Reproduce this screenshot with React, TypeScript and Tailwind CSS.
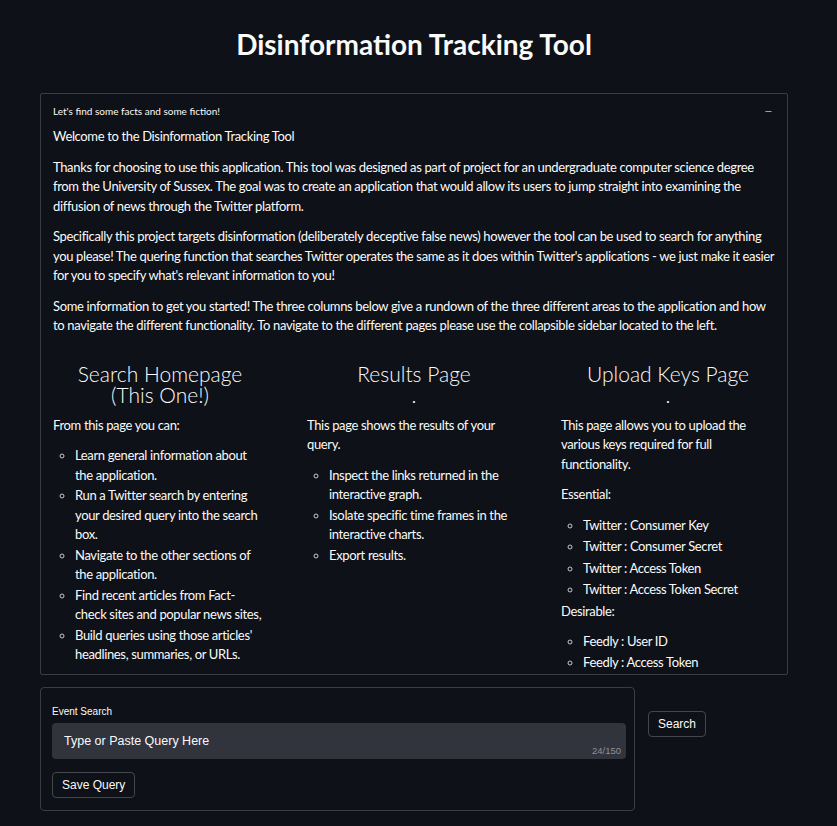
import { Minus } from 'lucide-react';

const body = "font-['Lato',sans-serif]";
const ui = "font-['Liberation_Sans',Arial,sans-serif]";

function Column({ title, sub, children }: { title: string; sub?: string; children: React.ReactNode }) {
    return (
        <div className="w-[214px]">
            <h3 className="text-center text-[21px] leading-[21px] font-light tracking-normal mb-[11px]">
                {title}
                <br />
                {sub}
            </h3>
            {children}
        </div>
    );
}

function Bullets({ items, className = '' }: { items: React.ReactNode[]; className?: string }) {
    return (
        <ul className={`list-[circle] pl-[22px] ${className}`}>
            {items.map((t, i) => (
                <li key={i} className="mb-[1px] marker:text-[#c8c8c8]">{t}</li>
            ))}
        </ul>
    );
}

export default function App() {
    return (
        <div className={`min-h-screen bg-[#0e1117] text-[#fafafa] ${body}`}>
            <div className="ml-[40px] w-[748px] pt-[28px]">
                <h1 className="text-center text-[28px] leading-[32px] font-bold mb-[33px]">
                    Disinformation Tracking Tool
                </h1>

                <div className="border border-[#3a3d44] rounded-[2px]">
                    <div className="flex items-center justify-between px-[12px] pt-[10px] pb-[9px]">
                        <span className="text-[10px] leading-[14px]">Let's find some facts and some fiction!</span>
                        <Minus className="w-[9px] h-[9px] text-[#a0a0a0] mr-[2px]" strokeWidth={3} />
                    </div>
                    <div className="px-[12px] pb-[1px] text-[13px] leading-[19.5px] tracking-[-0.35px]">
                        <p className="mb-[11px]">Welcome to the Disinformation Tracking Tool</p>
                        <p className="mb-[11px]">
                            Thanks for choosing to use this application. This tool was designed as part of project for an undergraduate computer science degree from the University of Sussex. The goal was to create an application that would allow its users to jump straight into examining the diffusion of news through the Twitter platform.
                        </p>
                        <p className="mb-[11px]">
                            Specifically this project targets disinformation (deliberately deceptive false news) however the tool can be used to search for anything you please! The quering function that searches Twitter operates the same as it does within Twitter's applications - we just make it easier for you to specify what's relevant information to you!
                        </p>
                        <p className="mb-[27px]">
                            Some information to get you started! The three columns below give a rundown of the three different areas to the application and how to navigate the different functionality. To navigate to the different pages please use the collapsible sidebar located to the left.
                        </p>

                        <div className="flex gap-[40px]">
                            <Column title="Search Homepage" sub="(This One!)">
                                <p className="mb-[11px]">From this page you can:</p>
                                <Bullets
                                    items={[
                                        'Learn general information about the application.',
                                        'Run a Twitter search by entering your desired query into the search box.',
                                        'Navigate to the other sections of the application.',
                                        <>Find recent articles from Fact-<br />check sites and popular news sites,</>,
                                        "Build queries using those articles' headlines, summaries, or URLs.",
                                    ]}
                                />
                            </Column>
                            <Column title="Results Page" sub=".">
                                <p className="mb-[11px]">This page shows the results of your query.</p>
                                <Bullets
                                    items={[
                                        'Inspect the links returned in the interactive graph.',
                                        'Isolate specific time frames in the interactive charts.',
                                        'Export results.',
                                    ]}
                                />
                            </Column>
                            <Column title="Upload Keys Page" sub=".">
                                <p className="mb-[11px]">This page allows you to upload the various keys required for full functionality.</p>
                                <p className="mb-[11px]">Essential:</p>
                                <Bullets
                                    className="[&>li]:mb-[2px]"
                                    items={[
                                        'Twitter : Consumer Key',
                                        'Twitter : Consumer Secret',
                                        'Twitter : Access Token',
                                        'Twitter : Access Token Secret',
                                    ]}
                                />
                                <p className="mb-[11px]">Desirable:</p>
                                <Bullets items={['Feedly : User ID', 'Feedly : Access Token']} />
                            </Column>
                        </div>
                    </div>
                </div>

                <div className="flex items-start gap-[13px] mt-[12px]">
                    <div className="w-[595px] border border-[#3a3d44] rounded-[4px] pl-[11px] pr-[8px] pt-[17px] pb-[12px]">
                        <label className={`block text-[10px] leading-[14px] mb-[4px] ${ui}`}>Event Search</label>
                        <div className="relative h-[36px] bg-[#31333d] rounded-[4px] px-[12px] flex items-center">
                            <span className={`text-[12.5px] ${ui}`}>Type or Paste Query Here</span>
                            <span className={`absolute right-[5px] bottom-[1px] text-[9.5px] text-[#8e9099] ${ui}`}>24/150</span>
                        </div>
                        <button className={`mt-[13px] h-[26px] px-[9px] border border-[#44464e] rounded-[4px] text-[12px] ${ui}`}>
                            Save Query
                        </button>
                    </div>
                    <button className={`mt-[24px] h-[26px] px-[9px] border border-[#44464e] rounded-[4px] text-[12px] ${ui}`}>
                        Search
                    </button>
                </div>
            </div>
        </div>
    );
}
